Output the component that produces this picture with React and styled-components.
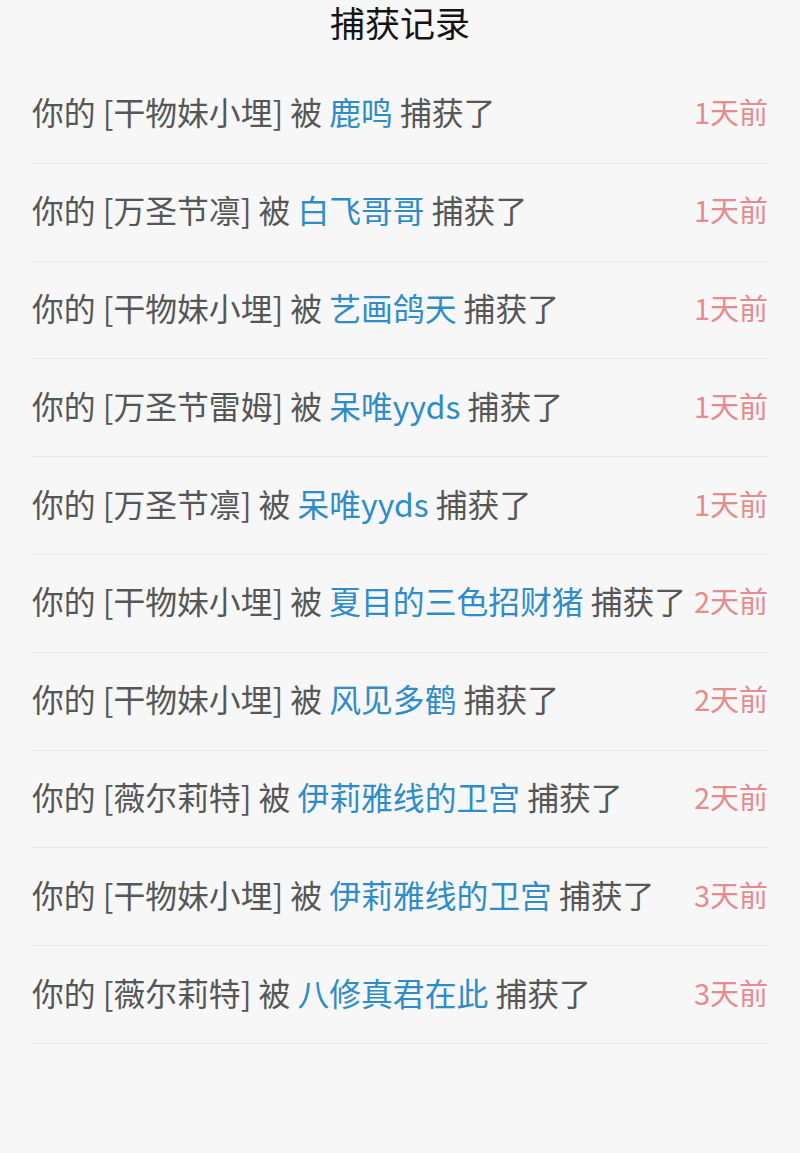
import React from "react";
import styled, { createGlobalStyle } from "styled-components";

const Global = createGlobalStyle`
  html, body { margin: 0; padding: 0; background: #f7f7f7; }
  body { font-family: "Noto Sans CJK SC", "Noto Sans", sans-serif; }
`;

const Page = styled.div`
  width: 800px;
  min-height: 1153px;
  background: #f7f7f7;
`;

const Title = styled.h1`
  margin: 0;
  height: 66px;
  font-size: 35px;
  font-weight: 400;
  line-height: 44px;
  text-align: center;
  color: #141414;
`;

const List = styled.ul`
  list-style: none;
  margin: 0;
  padding: 0 32px;
`;

const Row = styled.li`
  display: flex;
  align-items: center;
  justify-content: space-between;
  box-sizing: border-box;
  height: 97.8px;
  padding-bottom: 6px;
  border-bottom: 1px solid #e9e9e9;
  font-size: 31.8px;
  color: #565656;
  white-space: nowrap;
`;

const Msg = styled.span``;

const Name = styled.span`
  color: #2e8dc8;
`;

const Time = styled.span`
  color: #e58c90;
  font-size: 29px;
  flex-shrink: 0;
  margin-left: 6px;
`;

const data = [
  ["干物妹小埋", "鹿鸣", "1天前"],
  ["万圣节凛", "白飞哥哥", "1天前"],
  ["干物妹小埋", "艺画鸽天", "1天前"],
  ["万圣节雷姆", "呆唯yyds", "1天前"],
  ["万圣节凛", "呆唯yyds", "1天前"],
  ["干物妹小埋", "夏目的三色招财猪", "2天前"],
  ["干物妹小埋", "风见多鹤", "2天前"],
  ["薇尔莉特", "伊莉雅线的卫宫", "2天前"],
  ["干物妹小埋", "伊莉雅线的卫宫", "3天前"],
  ["薇尔莉特", "八修真君在此", "3天前"],
];

export default function App() {
  return (
    <Page>
      <Global />
      <Title>捕获记录</Title>
      <List>
        {data.map(([item, who, t], i) => (
          <Row key={i}>
            <Msg>
              你的 [{item}] 被 <Name>{who}</Name> 捕获了
            </Msg>
            <Time>{t}</Time>
          </Row>
        ))}
      </List>
    </Page>
  );
}
